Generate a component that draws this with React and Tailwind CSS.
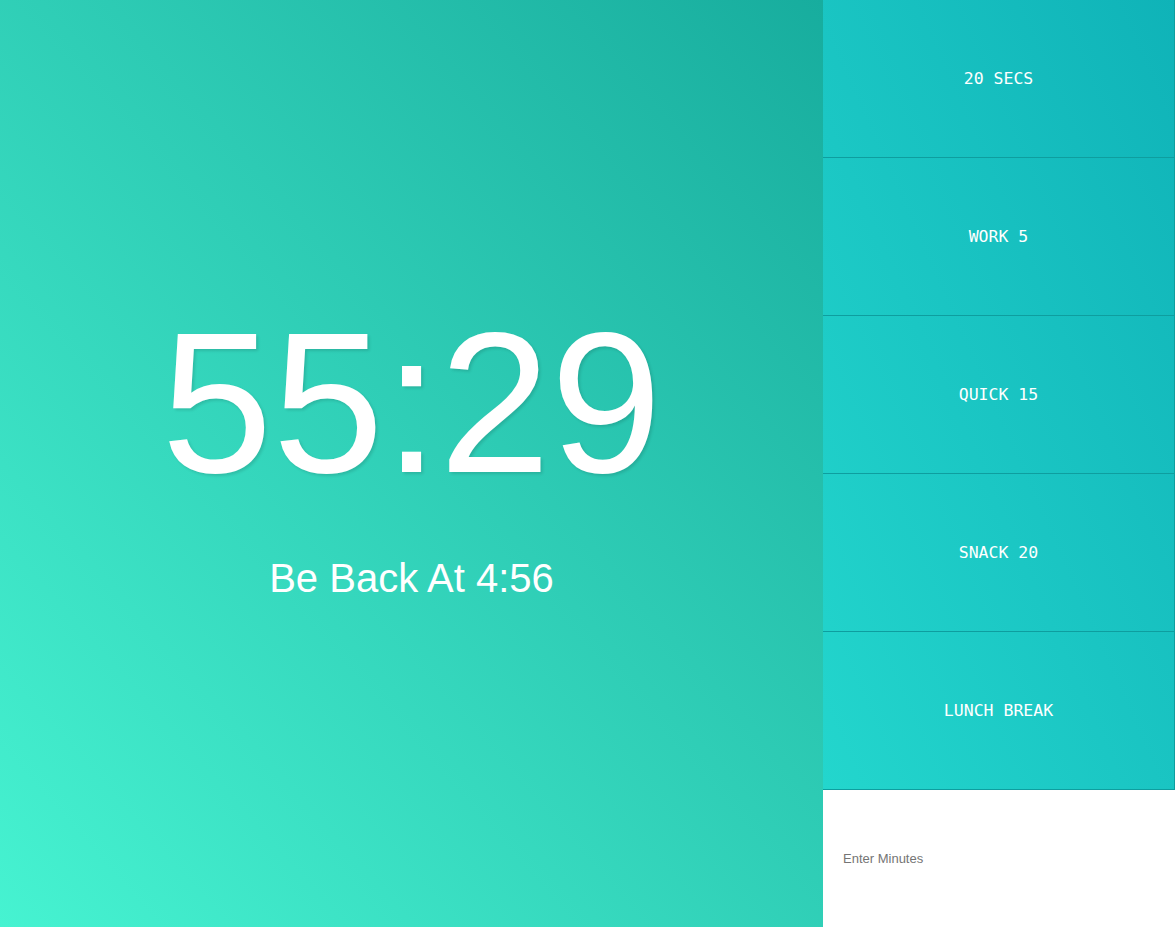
const presets = ['20 SECS', 'WORK 5', 'QUICK 15', 'SNACK 20', 'LUNCH BREAK'];

export default function App() {
  return (
    <div className="flex h-[927px] w-full overflow-hidden font-['Liberation_Sans',Arial,sans-serif]">
      {/* timer display */}
      <main className="flex-1 flex flex-col items-center justify-center pb-[26px] bg-gradient-to-tr from-[#46f3d1] to-[#17ad9e] text-white">
        <h1 className="text-[200px] leading-none font-normal [text-shadow:2px_2px_3px_rgba(0,0,0,0.12)]">55:29</h1>
        <p className="mt-[55px] text-[40px] leading-none">Be Back At 4:56</p>
      </main>

      {/* presets + custom input */}
      <aside className="w-[352px] shrink-0 flex flex-col">
        <div className="flex flex-col bg-gradient-to-bl from-[#0fb3b8] to-[#23d6cd]">
          {presets.map((label) => (
            <button
              key={label}
              className="h-[158px] pt-[2px] border-b border-r border-[#0e9e9f] text-white text-[16.5px] font-['DejaVu_Sans_Mono',monospace]"
            >
              {label}
            </button>
          ))}
        </div>
        <form className="flex-1 bg-white flex items-center">
          <input
            type="text"
            placeholder="Enter Minutes"
            className="w-full h-full px-5 text-[13px] text-gray-700 placeholder:text-[#757575] outline-none font-['Liberation_Sans',Arial,sans-serif]"
          />
        </form>
      </aside>
    </div>
  );
}
